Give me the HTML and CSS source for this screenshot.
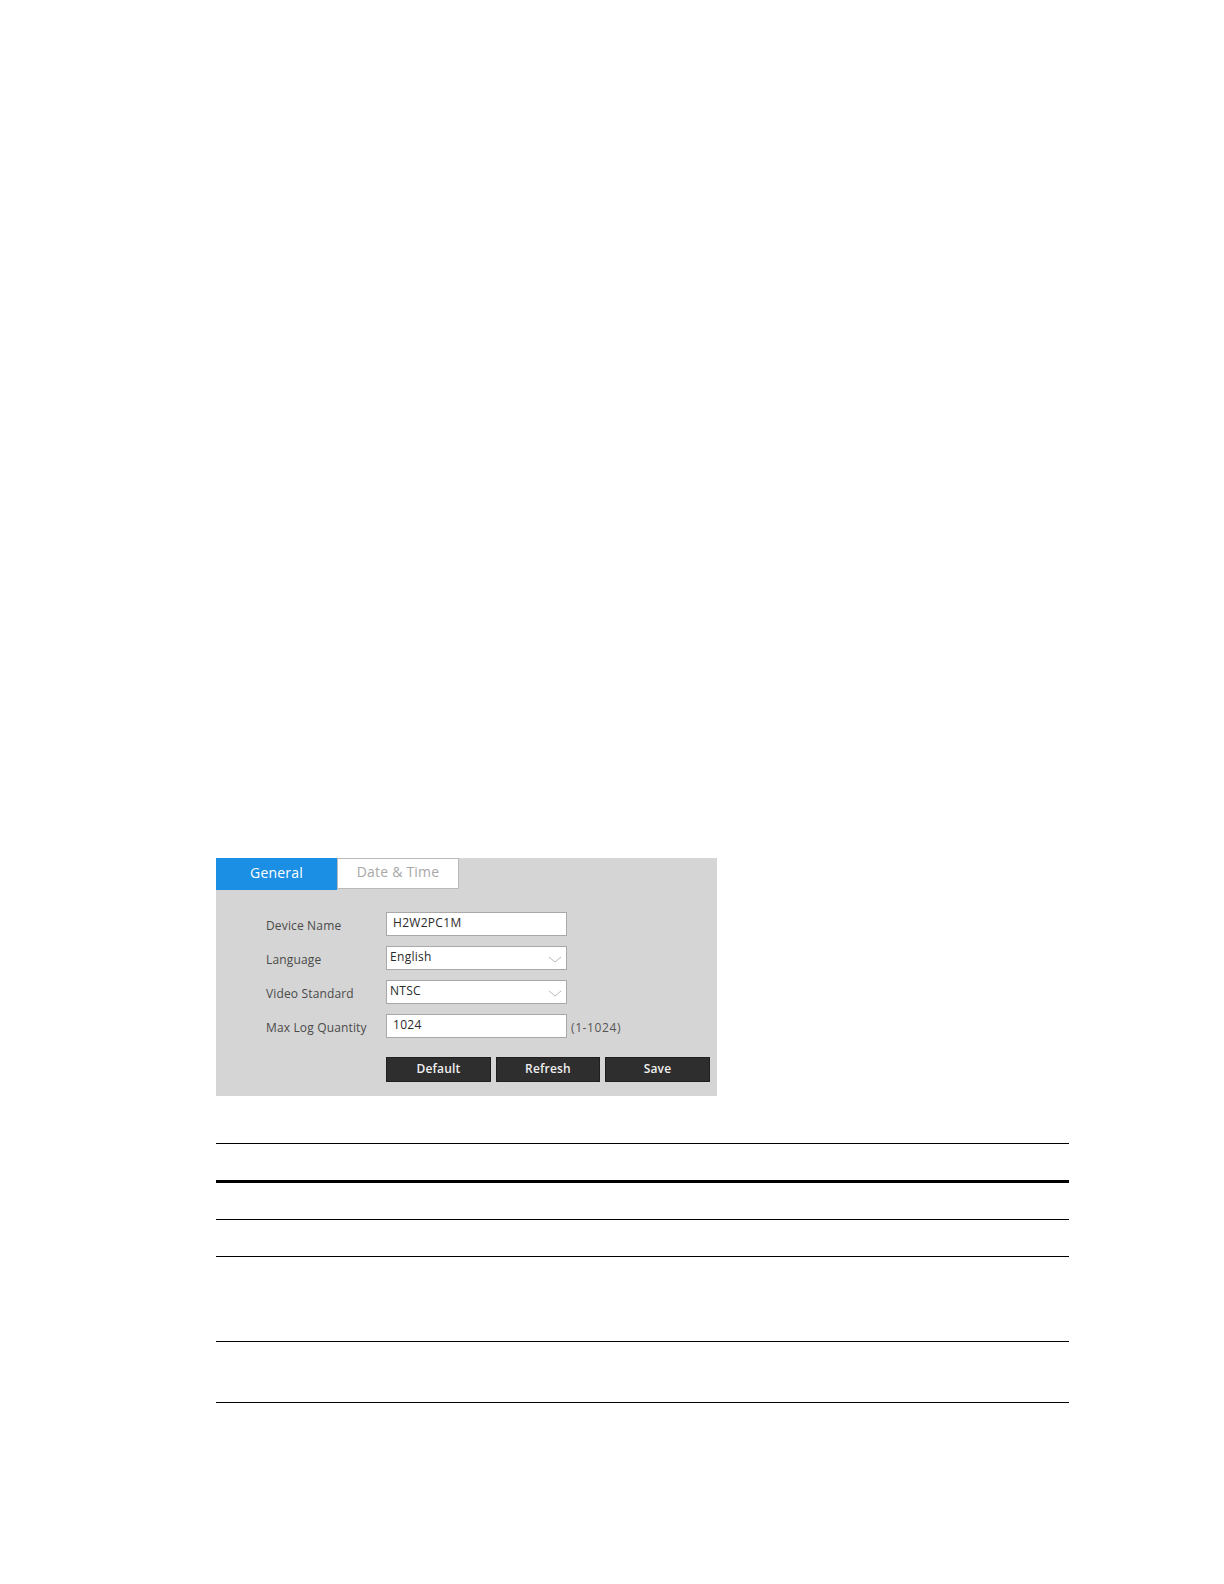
FILE: index.html
```html
<!DOCTYPE html>
<html lang="en">
<head>
<meta charset="utf-8">
<title>General Settings</title>
<link rel="stylesheet" href="styles.css">
</head>
<body>
<main class="page">
  <section class="panel">
    <div class="tabs">
      <div class="tab tab-active">General</div>
      <div class="tab tab-idle">Date &amp; Time</div>
    </div>
    <div class="form">
      <div class="row">
        <span class="label">Device Name</span>
        <div class="field"><span class="value value-pad">H2W2PC1M</span></div>
      </div>
      <div class="row">
        <span class="label">Language</span>
        <div class="field select"><span class="value">English</span>
          <svg class="chev" viewBox="0 0 14 7" width="14" height="7"><path d="M1 1 L7 6 L13 1" fill="none" stroke="#b9b9b9" stroke-width="1"/></svg>
        </div>
      </div>
      <div class="row">
        <span class="label">Video Standard</span>
        <div class="field select"><span class="value">NTSC</span>
          <svg class="chev" viewBox="0 0 14 7" width="14" height="7"><path d="M1 1 L7 6 L13 1" fill="none" stroke="#b9b9b9" stroke-width="1"/></svg>
        </div>
      </div>
      <div class="row">
        <span class="label">Max Log Quantity</span>
        <div class="field"><span class="value value-pad">1024</span></div>
        <span class="hint">(1-1024)</span>
      </div>
      <div class="buttons">
        <button class="btn btn-wide">Default</button>
        <button class="btn">Refresh</button>
        <button class="btn btn-wide">Save</button>
      </div>
    </div>
  </section>

  <table class="doc-table">
    <thead>
      <tr class="r-head"><th></th></tr>
    </thead>
    <tbody>
      <tr class="r1"><td></td></tr>
      <tr class="r2"><td></td></tr>
      <tr class="r3"><td></td></tr>
      <tr class="r4"><td></td></tr>
    </tbody>
  </table>
</main>
</body>
</html>
```

FILE: styles.css
```css
* { box-sizing: border-box; }

html, body {
  margin: 0;
  background: #ffffff;
}

.page {
  padding: 858px 0 0 216px;
  font-family: "Open Sans", "DejaVu Sans", sans-serif;
}

.panel {
  width: 501px;
  height: 238px;
  background: #d5d5d5;
  display: flex;
  flex-direction: column;
}

.tabs {
  display: flex;
  height: 32px;
}

.tab {
  font-size: 14px;
  display: flex;
  align-items: center;
  justify-content: center;
  padding-bottom: 4px;
  letter-spacing: 0.2px;
}

.tab-active {
  width: 121px;
  background: #1b8fe4;
  color: #ffffff;
}

.tab-idle {
  width: 122px;
  height: 31px;
  background: #ffffff;
  color: #a8a8a8;
  border: 1px solid #b9b9b9;
}

.form {
  padding: 22px 0 0 50px;
  display: flex;
  flex-direction: column;
  gap: 10px;
}

.row {
  display: flex;
  align-items: center;
  height: 24px;
}

.label {
  width: 120px;
  font-size: 12px;
  color: #4a4a4a;
  padding-top: 2px;
  letter-spacing: 0.15px;
}

.field {
  width: 181px;
  height: 24px;
  background: #ffffff;
  border: 1px solid #a9a9a9;
  display: flex;
  align-items: center;
  justify-content: space-between;
  padding: 0 4px 3px 3px;
}

.value {
  font-size: 12px;
  color: #2a2a2a;
  letter-spacing: 0.3px;
}

.value-pad {
  padding-left: 3px;
}

.chev {
  display: block;
  margin-top: 5px;
}

.hint {
  margin-left: 4px;
  font-size: 12px;
  color: #555555;
  padding-top: 2px;
  letter-spacing: 0.6px;
}

.buttons {
  display: flex;
  gap: 5px;
  margin: 9px 0 0 120px;
}

.btn {
  width: 104px;
  height: 25px;
  background: #2e2e2e;
  color: #f0f0f0;
  border: 1px solid #1f1f1f;
  font-family: "Open Sans", "DejaVu Sans", sans-serif;
  font-size: 12px;
  font-weight: 600;
  padding: 0 0 2px 0;
  letter-spacing: 0.2px;
}

.btn-wide {
  width: 105px;
}

.doc-table {
  width: 853px;
  margin-top: 47px;
  border-collapse: collapse;
}

.doc-table th,
.doc-table td {
  padding: 0;
}

.r-head th {
  height: 38px;
  border-top: 1px solid #000000;
  border-bottom: 3px solid #000000;
}

.r1 td { height: 38px; border-bottom: 1px solid #000000; }
.r2 td { height: 37px; border-bottom: 1px solid #000000; }
.r3 td { height: 85px; border-bottom: 1px solid #000000; }
.r4 td { height: 61px; border-bottom: 1px solid #000000; }
```
